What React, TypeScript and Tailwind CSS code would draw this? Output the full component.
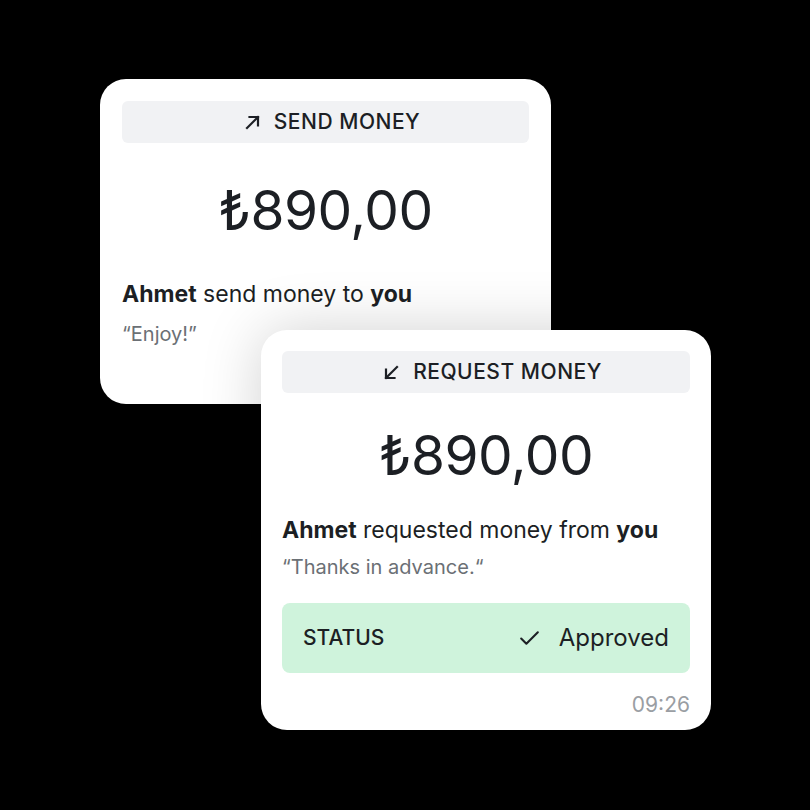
import { Check } from 'lucide-react';

const font = { fontFamily: 'Inter, "Liberation Sans", sans-serif' };

function Arrow({ down }: { down?: boolean }) {
  return (
    <svg width="15" height="15" viewBox="0 0 15 15" fill="none" stroke="currentColor" strokeWidth="2.2" strokeLinecap="square" className={down ? 'rotate-180' : ''}>
      <path d="M2 13L13 2" />
      <path d="M4.5 2H13V10.5" />
    </svg>
  );
}

function Header({ label, down }: { label: string; down?: boolean }) {
  return (
    <div className="flex items-center justify-center gap-[14px] h-[42px] pl-[14px] rounded-md bg-[#f1f2f4] text-[#1c1f24]">
      <Arrow down={down} />
      <span className="text-[21px] font-medium tracking-[0.025em]">{label}</span>
    </div>
  );
}

function Amount() {
  return (
    <div className="flex items-center justify-center h-[68px] text-[55px] leading-none text-[#1c1f24] tracking-[-0.01em]">
      ₺890,00
    </div>
  );
}

export default function App() {
  return (
    <div style={font} className="relative w-[810px] h-[810px] bg-black overflow-hidden">
      {/* Send card */}
      <div className="absolute left-[100px] top-[79px] w-[451px] h-[325px] rounded-[26px] bg-white px-[22px] pt-[22px]">
        <Header label="SEND MONEY" />
        <div className="mt-[33px]">
          <Amount />
        </div>
        <p className="mt-[36px] h-[28px] leading-[28px] text-[23px] text-[#1c1f24]">
          <span className="font-bold">Ahmet</span> send money to <span className="font-bold">you</span>
        </p>
        <p className="mt-[14px] h-[24px] leading-[24px] text-[20px] text-[#6b7075]">“Enjoy!”</p>
      </div>

      {/* Request card */}
      <div className="absolute left-[261px] top-[330px] w-[450px] h-[400px] rounded-[26px] bg-white px-[21px] pt-[21px] shadow-[0_0_60px_rgba(0,0,0,0.18)]">
        <Header label="REQUEST MONEY" down />
        <div className="mt-[28px]">
          <Amount />
        </div>
        <p className="mt-[27px] h-[28px] leading-[28px] text-[23px] text-[#1c1f24]">
          <span className="font-bold">Ahmet</span> requested money from <span className="font-bold">you</span>
        </p>
        <p className="mt-[11px] h-[24px] leading-[24px] text-[20px] text-[#6b7075]">“Thanks in advance.“</p>
        <div className="mt-[24px] h-[70px] rounded-lg bg-[#cff3dc] flex items-center justify-between px-[21px] text-[#1c1f24]">
          <span className="text-[21px] font-medium">STATUS</span>
          <span className="flex items-center gap-[17px]">
            <Check className="w-[25px] h-[25px]" strokeWidth={2} />
            <span className="text-[24px]">Approved</span>
          </span>
        </div>
        <div className="mt-[20px] h-[24px] leading-[24px] text-right text-[21px] text-[#9a9ea3]">09:26</div>
      </div>
    </div>
  );
}
